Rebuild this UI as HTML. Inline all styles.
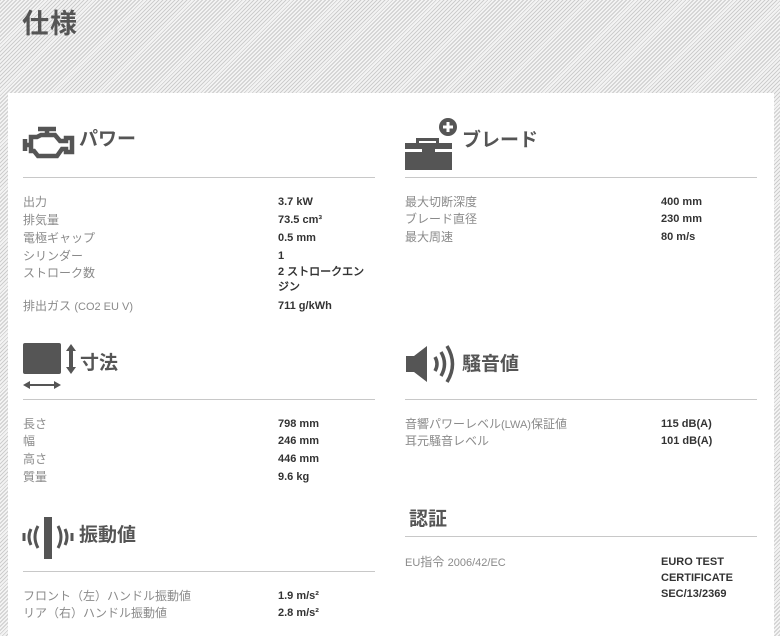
<!DOCTYPE html>
<html><head><meta charset="utf-8"><style>
*{margin:0;padding:0;box-sizing:border-box}
html,body{width:780px;height:636px;overflow:hidden}
body{position:relative;font-family:"Liberation Sans","Noto Sans CJK JP",sans-serif;
background:repeating-linear-gradient(135deg,#cdcdcd 0 1px,#f3f3f3 1px 2.8px);}
.title{position:absolute;left:22px;top:2px;font-size:27px;font-weight:bold;color:#555;letter-spacing:1px}
.panel{position:absolute;left:8px;top:93px;width:766px;height:560px;background:#fff}
.a{position:absolute;white-space:nowrap}
.h{font-size:19px;font-weight:bold;color:#555;line-height:24px}
.line{position:absolute;height:1px;background:#c8c8c8;width:352px}
.l{font-size:12px;color:#8a8a8a;line-height:16px}
.v{font-size:11px;font-weight:bold;color:#333;line-height:16px;font-family:"Liberation Sans Narrow","Liberation Sans",sans-serif}
</style></head><body>
<div class="title">仕様</div>
<div class="panel"></div>

<svg class="a" style="left:22px;top:125px" width="56" height="38" viewBox="0 0 56 38"><g fill="none" stroke="#555" stroke-width="4.5"><path d="M16 4h18M25 4v7"/><path d="M3 14v12M3 20h6M9 12h6l4-2h14l5 6h6v-3h6v14h-6v-3h-4l-5 7H16l-4-5H9z"/></g></svg>
<div class="a h" style="left:79px;top:128px">パワー</div>
<div class="line" style="left:23px;top:177px"></div>
<div class="a l" style="left:23px;top:194px">出力</div><div class="a v" style="left:278px;top:194px">3.7 kW</div>
<div class="a l" style="left:23px;top:212px">排気量</div><div class="a v" style="left:278px;top:212px">73.5 cm³</div>
<div class="a l" style="left:23px;top:230px">電極ギャップ</div><div class="a v" style="left:278px;top:230px">0.5 mm</div>
<div class="a l" style="left:23px;top:248px">シリンダー</div><div class="a v" style="left:278px;top:248px">1</div>
<div class="a l" style="left:23px;top:265px">ストローク数</div><div class="a v" style="left:278px;top:265px;line-height:15px">2 ストロークエン<br>ジン</div>
<div class="a l" style="left:23px;top:298px">排出ガス <span style="font-size:11px">(CO2 EU V)</span></div><div class="a v" style="left:278px;top:298px">711 g/kWh</div>

<svg class="a" style="left:405px;top:118px" width="56" height="52" viewBox="0 0 56 52"><rect x="0" y="25" width="47" height="6" fill="#555"/><rect x="0" y="34" width="47" height="18" fill="#555"/><rect x="11" y="20" width="3" height="6" fill="#555"/><rect x="11" y="20" width="23" height="3" fill="#555"/><rect x="31" y="20" width="3" height="6" fill="#555"/><rect x="17" y="31" width="13" height="6" fill="#555"/><circle cx="43" cy="9" r="9" fill="#555"/><path d="M43 4v10M38 9h10" stroke="#fff" stroke-width="3"/></svg>
<div class="a h" style="left:462px;top:129px">ブレード</div>
<div class="line" style="left:405px;top:177px"></div>
<div class="a l" style="left:405px;top:194px">最大切断深度</div><div class="a v" style="left:661px;top:194px">400 mm</div>
<div class="a l" style="left:405px;top:211px">ブレード直径</div><div class="a v" style="left:661px;top:211px">230 mm</div>
<div class="a l" style="left:405px;top:229px">最大周速</div><div class="a v" style="left:661px;top:229px">80 m/s</div>

<svg class="a" style="left:22px;top:342px" width="58" height="48" viewBox="0 0 58 48"><rect x="1" y="1" width="38" height="31" rx="2" fill="#555"/><path d="M49 2l-5 7h3v16h-3l5 7 5-7h-3V9h3z" fill="#555"/><path d="M1 43l7-4v3h24v-3l7 4-7 4v-3H8v3z" fill="#555"/></svg>
<div class="a h" style="left:80px;top:352px">寸法</div>
<div class="line" style="left:23px;top:399px"></div>
<div class="a l" style="left:23px;top:416px">長さ</div><div class="a v" style="left:278px;top:416px">798 mm</div>
<div class="a l" style="left:23px;top:433px">幅</div><div class="a v" style="left:278px;top:433px">246 mm</div>
<div class="a l" style="left:23px;top:451px">高さ</div><div class="a v" style="left:278px;top:451px">446 mm</div>
<div class="a l" style="left:23px;top:469px">質量</div><div class="a v" style="left:278px;top:469px">9.6 kg</div>

<svg class="a" style="left:405px;top:343px" width="56" height="44" viewBox="0 0 56 44"><path d="M1 13h8l13-10v36L9 29H1z" fill="#555"/><g fill="none" stroke="#555" stroke-width="3.5"><path d="M30 14q4 7 0 14"/><path d="M36 9q7 12 0 24"/><path d="M42 3q11 18 0 36"/></g></svg>
<div class="a h" style="left:462px;top:353px">騒音値</div>
<div class="line" style="left:405px;top:399px"></div>
<div class="a l" style="left:405px;top:416px">音響パワーレベル<span style="font-size:11px">(LWA)</span>保証値</div><div class="a v" style="left:661px;top:416px">115 dB(A)</div>
<div class="a l" style="left:405px;top:433px">耳元騒音レベル</div><div class="a v" style="left:661px;top:433px">101 dB(A)</div>

<svg class="a" style="left:22px;top:516px" width="56" height="44" viewBox="0 0 56 44"><rect x="22" y="1" width="8" height="42" fill="#555"/><g fill="none" stroke="#555" stroke-width="3"><path d="M2 17v8"/><path d="M9 13q-4 8 0 16"/><path d="M16 10q-6 11 0 22"/><path d="M36 10q6 11 0 22"/><path d="M43 13q4 8 0 16"/><path d="M50 17v8"/></g></svg>
<div class="a h" style="left:79px;top:524px">振動値</div>
<div class="line" style="left:23px;top:571px"></div>
<div class="a l" style="left:23px;top:588px">フロント（左）ハンドル振動値</div><div class="a v" style="left:278px;top:588px">1.9 m/s²</div>
<div class="a l" style="left:23px;top:605px">リア（右）ハンドル振動値</div><div class="a v" style="left:278px;top:605px">2.8 m/s²</div>

<div class="a h" style="left:409px;top:508px">認証</div>
<div class="line" style="left:405px;top:536px"></div>
<div class="a l" style="left:405px;top:554px"><span style="font-size:11px">EU</span>指令 <span style="font-size:11px">2006/42/EC</span></div>
<div class="a v" style="left:661px;top:554px;line-height:16px">EURO TEST<br>CERTIFICATE<br>SEC/13/2369</div>
</body></html>
